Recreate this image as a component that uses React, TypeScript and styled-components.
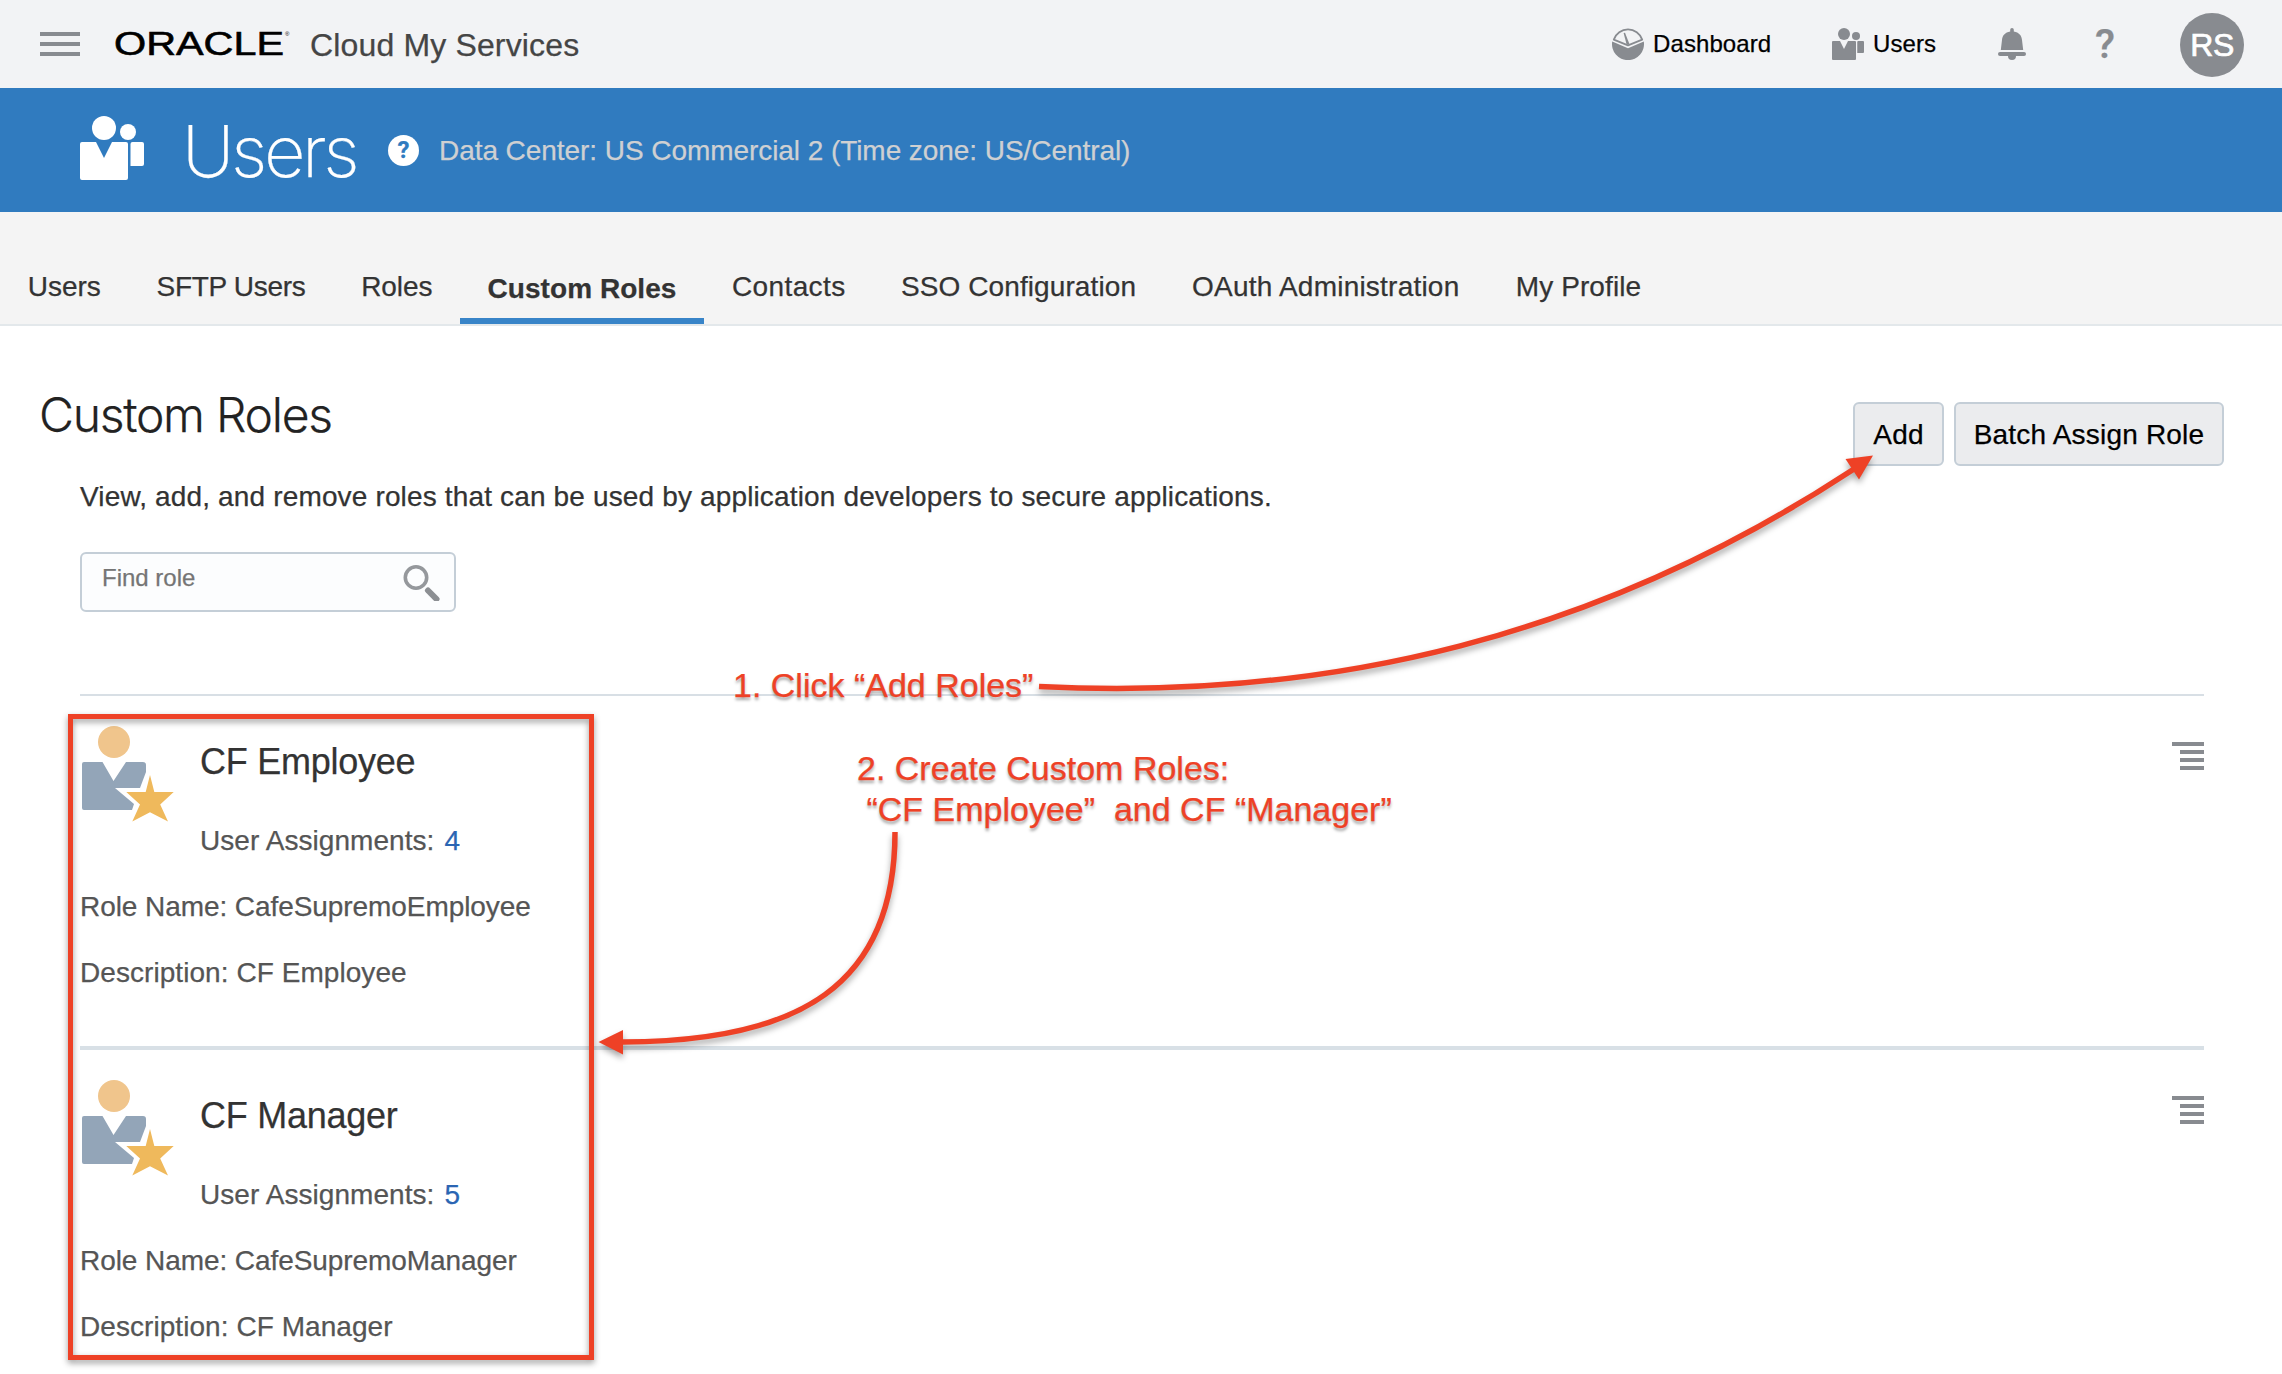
import React from "react";
import styled, { createGlobalStyle } from "styled-components";

const RED = "#ee4126";
const GREY = "#888b90";
const SANS = '"Liberation Sans", Arial, sans-serif';
const LIGHT = 'Inter, "Liberation Sans", sans-serif';

const GlobalStyle = createGlobalStyle`
  *, *::before, *::after { box-sizing: border-box; }
  body { margin: 0; background: #fff; font-family: ${SANS}; -webkit-text-stroke: 0.25px; }
  h1, h2, h3, p { margin: 0; font-weight: 400; }
  button, input { font-family: inherit; margin: 0; }
  svg { display: block; flex: none; }
`;

const Page = styled.div`
  position: relative;
  width: 2282px;
  height: 1374px;
  overflow: hidden;
  background: #fff;
`;

/* Top bar */
const TopBar = styled.header`
  display: flex;
  align-items: center;
  height: 88px;
  padding: 0 38px 0 40px;
  background: #f2f3f5;
`;

const MenuButton = styled.button`
  display: flex;
  flex-direction: column;
  gap: 6px;
  width: 40px;
  padding: 0;
  border: 0;
  background: none;
`;

const MenuBar = styled.span`
  height: 4px;
  background: ${GREY};
`;

const Brand = styled.div`
  display: flex;
  align-items: center;
  margin-left: 33px;
`;

const Product = styled.span`
  margin-left: 16px;
  padding-top: 2px;
  font-size: 32px;
  line-height: 40px;
  letter-spacing: 0.15px;
  color: #454545;
  white-space: nowrap;
`;

const TopLinks = styled.nav`
  display: flex;
  align-items: center;
  margin-left: auto;
`;

const TopLink = styled.a<{ $after: number }>`
  display: flex;
  align-items: center;
  gap: 9px;
  margin-right: ${(p) => p.$after}px;
  font-size: 24px;
  line-height: 32px;
  letter-spacing: 0.1px;
  color: #000;
`;

const LinkLabel = styled.span<{ $width: number }>`
  width: ${(p) => p.$width}px;
  white-space: nowrap;
`;

const HelpMark = styled.span`
  width: 20px;
  margin: 0 65px 0 69px;
  font: 500 41px/48px Roboto, sans-serif;
  text-align: center;
  color: ${GREY};
`;

const Avatar = styled.span`
  width: 64px;
  height: 64px;
  margin-top: 2px;
  border-radius: 50%;
  background: ${GREY};
  color: #fff;
  font-size: 32px;
  line-height: 65px;
  letter-spacing: -0.5px;
  text-align: center;
  -webkit-text-stroke: 0.7px;
`;

/* Blue banner */
const Banner = styled.section`
  display: flex;
  align-items: center;
  height: 124px;
  padding: 0 80px;
  background: #307bbf;
`;

const BannerIcon = styled.span`
  margin-bottom: 4px;
`;

const BannerTitle = styled.h1`
  width: 174px;
  margin-left: 38px;
  padding-top: 2px;
  font-family: ${LIGHT};
  font-size: 72px;
  font-weight: 200;
  line-height: 88px;
  letter-spacing: -3.4px;
  color: #fff;
`;

const HelpBadge = styled.span`
  width: 31px;
  height: 31px;
  margin: 0 20px 0 32px;
  border-radius: 50%;
  background: #fff;
  color: #307bbf;
  font: 700 24px/31px Roboto, sans-serif;
  text-align: center;
`;

const DataCenter = styled.span`
  padding-top: 1px;
  font-size: 28px;
  line-height: 36px;
  letter-spacing: -0.06px;
  color: #cfd0d2;
  white-space: nowrap;
`;

/* Tabs */
const Tabs = styled.nav`
  display: flex;
  height: 114px;
  border-bottom: 2px solid #e3e8eb;
  background: #f4f4f4;
`;

const Tab = styled.a<{ $width: number; $spacing: number; $active?: boolean }>`
  width: ${(p) => p.$width}px;
  padding-top: ${(p) => (p.$active ? 59 : 57)}px;
  border-bottom: 6px solid ${(p) => (p.$active ? "#3884c8" : "transparent")};
  font-size: 28px;
  font-weight: ${(p) => (p.$active ? 700 : 400)};
  line-height: 36px;
  letter-spacing: ${(p) => p.$spacing}px;
  text-align: center;
  white-space: nowrap;
  color: #333;
`;

/* Content */
const HeadingRow = styled.div`
  display: flex;
  justify-content: space-between;
  height: 152px;
  padding: 0 58px 0 39px;
`;

const Heading = styled.h2`
  margin-top: 59px;
  font-family: ${LIGHT};
  font-size: 48px;
  font-weight: 300;
  line-height: 60px;
  letter-spacing: -1.25px;
  color: #222;
`;

const Actions = styled.div`
  display: flex;
  gap: 10px;
  margin-top: 76px;
`;

const ActionButton = styled.button<{ $width: number }>`
  width: ${(p) => p.$width}px;
  height: 64px;
  padding: 1px 0 0;
  border: 2px solid #c4ced7;
  border-radius: 6px;
  background: #ebecee;
  font-size: 28px;
  line-height: 59px;
  letter-spacing: 0.2px;
  color: #000;
  white-space: nowrap;
`;

const Body = styled.main`
  padding: 0 78px 0 80px;
`;

const Intro = styled.p`
  padding-top: 1px;
  font-size: 28px;
  line-height: 36px;
  letter-spacing: 0.15px;
  color: #333;
  white-space: nowrap;
`;

const SearchBox = styled.label`
  display: flex;
  align-items: center;
  width: 376px;
  height: 60px;
  margin-top: 37px;
  padding: 0 14px 0 20px;
  border: 2px solid #c4ced7;
  border-radius: 6px;
  background: #fcfdfe;
`;

const SearchInput = styled.input`
  flex: 1;
  min-width: 0;
  height: 32px;
  margin-bottom: 8px;
  padding: 0;
  border: 0;
  outline: 0;
  background: none;
  font-size: 24px;
  line-height: 32px;
  &::placeholder { color: #757575; opacity: 1; }
`;

const RoleList = styled.div`
  margin-top: 82px;
  border-top: 2px solid #d8dfe5;
`;

const Role = styled.article`
  height: 354px;
  padding-top: 30px;
  border-bottom: 4px solid #d8e0e6;
  font-size: 28px;
  line-height: 36px;
  color: #555;
`;

const RoleHead = styled.div`
  display: flex;
  align-items: flex-start;
`;

const RoleInfo = styled.div`
  flex: 1;
  margin-left: 24px;
  padding-top: 14px;
  letter-spacing: 0.06px;
`;

const RoleTitle = styled.h3`
  margin-bottom: 39px;
  font-size: 36px;
  line-height: 44px;
  letter-spacing: -0.25px;
  color: #333;
`;

const Count = styled.a`
  margin-left: 10px;
  color: #2b65b3;
`;

const RoleField = styled.p<{ $spacing: number }>`
  margin-top: 30px;
  letter-spacing: ${(p) => p.$spacing}px;
`;

const MenuIconSlot = styled.div`
  padding-top: 16px;
`;

/* Annotation layer */
const Frame = styled.div`
  position: absolute;
  left: 68px;
  top: 714px;
  width: 526px;
  height: 646px;
  border: 5px solid ${RED};
  filter: drop-shadow(0 3px 3px rgba(0, 0, 0, 0.4));
`;

const Arrows = styled.svg`
  position: absolute;
  left: 0;
  top: 0;
  pointer-events: none;
  filter: drop-shadow(0 4px 3px rgba(0, 0, 0, 0.35));
`;

const Note = styled.p<{ $x: number; $y: number }>`
  position: absolute;
  left: ${(p) => p.$x}px;
  top: ${(p) => p.$y}px;
  font-size: 34px;
  line-height: 41px;
  white-space: pre;
  color: ${RED};
  text-shadow: 0 3px 3px rgba(0, 0, 0, 0.35);
`;

const OracleMark = () => (
  <svg width="181" height="46" viewBox="0 0 181 46">
    <text
      x="1"
      y="34"
      fontFamily={SANS}
      fontSize="33"
      textLength="170"
      lengthAdjust="spacingAndGlyphs"
      stroke="#000"
      strokeWidth="0.6"
    >
      ORACLE
    </text>
    <text x="172" y="15" fontFamily={SANS} fontSize="6">®</text>
  </svg>
);

const PeopleIcon = ({ size, color }: { size: number; color: string }) => (
  <svg width={size} height={size} viewBox="0 0 64 64" fill={color}>
    <circle cx="24" cy="12" r="12" />
    <circle cx="48" cy="16" r="8" />
    <path d="M2 26H16L24 42L32 26H46Q48 26 48 28V62Q48 64 46 64H2Q0 64 0 62V28Q0 26 2 26Z" />
    <path d="M52.500 26H62Q64 26 64 28V48Q64 50 62 50H50.500V28Q50.500 26 52.500 26Z" />
  </svg>
);

const GaugeIcon = () => (
  <svg width="32" height="32" viewBox="0 0 32 32">
    <path d="M1.800 11.600A15 15 0 0 1 30.200 11.600L16 17.400Z" fill="none" stroke={GREY} strokeWidth="1.800" strokeLinejoin="round" />
    <path d="M11.600 5L13 4.800L17.600 16.500L14.600 16.500Z" fill={GREY} />
    <path d="M0.200 13.600L16 20.200L31.800 13.600A16 16 0 1 1 0.200 13.600Z" fill={GREY} />
  </svg>
);

const BellIcon = () => (
  <svg width="28" height="32" viewBox="0 0 28 32" fill={GREY}>
    <path d="M12.200 3.500V1.800A1.800 1.800 0 0 1 15.800 1.800V3.500C21 4.500 23.700 7.500 24 12L25.200 22H2.800L4 12C4.300 7.500 7 4.500 12.200 3.500Z" />
    <rect y="24" width="28" height="4" rx="2" />
    <path d="M10 28H18A4 4 0 0 1 10 28Z" />
  </svg>
);

const SearchIcon = () => (
  <svg width="38" height="38" viewBox="0 0 38 38">
    <circle cx="14" cy="14.500" r="10.700" fill="none" stroke="#95989c" strokeWidth="3.600" />
    <path d="M26 27.500L34.500 36" stroke="#8c8f93" strokeWidth="6" strokeLinecap="round" />
  </svg>
);

const RoleIcon = () => (
  <svg width="96" height="96" viewBox="0 0 96 96">
    <circle cx="34" cy="16" r="16" fill="#f0c58c" />
    <path
      d="M4 36H22.500L33.500 55L46 36H63Q66 36 66 39V46L60 62H35L54 78L52 84H4Q2 84 2 82V38Q2 36 4 36Z"
      fill="#93a5b8"
    />
    <path
      d="M70 49L74.300 66H93.700L80.200 78.500L88 95.500L70 86.300L52.300 95.500L60 78.500L46.300 66H65.700Z"
      fill="#efb95c"
    />
  </svg>
);

const ListIcon = () => (
  <svg width="32" height="28" viewBox="0 0 32 28" fill={GREY}>
    <rect x="0" y="0" width="32" height="4" />
    <rect x="8" y="8" width="24" height="4" />
    <rect x="8" y="16" width="24" height="4" />
    <rect x="8" y="24" width="24" height="4" />
  </svg>
);

const tabs = [
  { label: "Users", width: 128.5, spacing: 0 },
  { label: "SFTP Users", width: 205, spacing: -0.3 },
  { label: "Roles", width: 126.5, spacing: -0.1 },
  { label: "Custom Roles", width: 244, spacing: 0.05, active: true },
  { label: "Contacts", width: 169.5, spacing: 0.4 },
  { label: "SSO Configuration", width: 290, spacing: 0.1 },
  { label: "OAuth Administration", width: 324.5, spacing: 0.22 },
  { label: "My Profile", width: 181, spacing: 0.1 },
];

const roles = [
  { title: "CF Employee", count: 4, name: "CafeSupremoEmployee" },
  { title: "CF Manager", count: 5, name: "CafeSupremoManager" },
];

export default function App() {
  return (
    <>
      <GlobalStyle />
      <Page>
        <TopBar>
          <MenuButton aria-label="Menu">
            <MenuBar />
            <MenuBar />
            <MenuBar />
          </MenuButton>
          <Brand>
            <OracleMark />
            <Product>Cloud My Services</Product>
          </Brand>
          <TopLinks>
            <TopLink $after={61}>
              <GaugeIcon />
              <LinkLabel $width={118}>Dashboard</LinkLabel>
            </TopLink>
            <TopLink $after={62}>
              <PeopleIcon size={32} color={GREY} />
              <LinkLabel $width={63}>Users</LinkLabel>
            </TopLink>
            <BellIcon />
            <HelpMark>?</HelpMark>
            <Avatar>RS</Avatar>
          </TopLinks>
        </TopBar>

        <Banner>
          <BannerIcon>
            <PeopleIcon size={64} color="#fff" />
          </BannerIcon>
          <BannerTitle>Users</BannerTitle>
          <HelpBadge>?</HelpBadge>
          <DataCenter>Data Center: US Commercial 2 (Time zone: US/Central)</DataCenter>
        </Banner>

        <Tabs>
          {tabs.map((t) => (
            <Tab key={t.label} $width={t.width} $spacing={t.spacing} $active={t.active}>
              {t.label}
            </Tab>
          ))}
        </Tabs>

        <HeadingRow>
          <Heading>Custom Roles</Heading>
          <Actions>
            <ActionButton $width={91}>Add</ActionButton>
            <ActionButton $width={270}>Batch Assign Role</ActionButton>
          </Actions>
        </HeadingRow>

        <Body>
          <Intro>
            View, add, and remove roles that can be used by application developers to secure applications.
          </Intro>
          <SearchBox>
            <SearchInput placeholder="Find role" />
            <SearchIcon />
          </SearchBox>
          <RoleList>
            {roles.map((r) => (
              <Role key={r.name}>
                <RoleHead>
                  <RoleIcon />
                  <RoleInfo>
                    <RoleTitle>{r.title}</RoleTitle>
                    <p>
                      User Assignments:
                      <Count>{r.count}</Count>
                    </p>
                  </RoleInfo>
                  <MenuIconSlot>
                    <ListIcon />
                  </MenuIconSlot>
                </RoleHead>
                <RoleField $spacing={-0.07}>Role Name: {r.name}</RoleField>
                <RoleField $spacing={0.06}>Description: {r.title}</RoleField>
              </Role>
            ))}
          </RoleList>
        </Body>

        <Frame />
        <Arrows width="2282" height="1374" viewBox="0 0 2282 1374">
          <g fill="none" stroke={RED} strokeWidth="5.500">
            <path d="M1039 686.500C1330 701 1600 636 1854 469" />
            <path d="M895 832C895 985 800 1042 622 1042" />
          </g>
          <g fill={RED}>
            <path d="M1873 455.500L1845.500 459L1859 479.500Z" />
            <path d="M598.500 1042L623 1030V1054.500Z" />
          </g>
        </Arrows>
        <Note $x={733} $y={665}>1. Click “Add Roles”</Note>
        <Note $x={857} $y={748}>{"2. Create Custom Roles:\n “CF Employee”  and CF “Manager”"}</Note>
      </Page>
    </>
  );
}
